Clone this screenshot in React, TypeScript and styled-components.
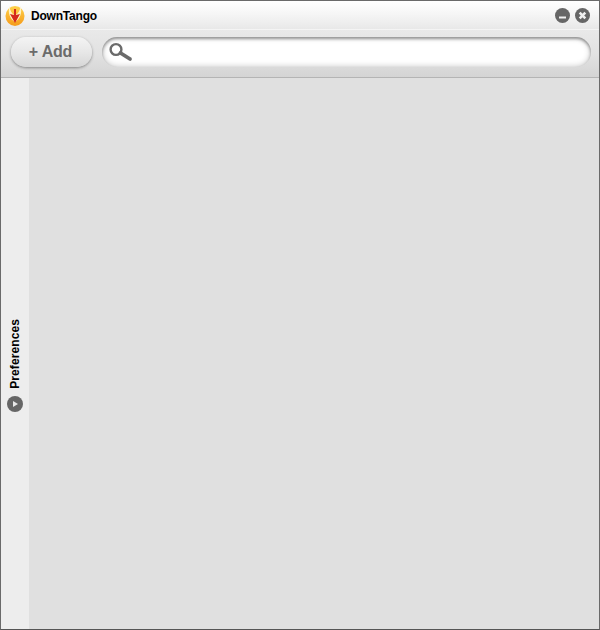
import React from "react"
import styled, { createGlobalStyle } from "styled-components"

const GlobalStyle = createGlobalStyle`
html, body {
    margin: 0;
    padding: 0;
    background: #e0e0e0;
}
`

const StyledWindow = styled.div`
width: 600px;
height: 630px;
box-sizing: border-box;
border: 1px solid #6a6a6a;
border-bottom-color: #555;
display: flex;
flex-direction: column;
font-family: "Liberation Sans", Arial, sans-serif;
overflow: hidden;
`

const StyledTitleBar = styled.div`
height: 28px;
flex: none;
display: flex;
align-items: center;
padding: 0 9px 0 3px;
background: linear-gradient(#ffffff 0%, #f6f6f6 45%, #e8e8e8 100%);
`

const StyledTitle = styled.span`
margin-left: 5px;
padding-top: 2px;
font-size: 12px;
font-weight: bold;
letter-spacing: -0.2px;
color: #000;
flex: 1;
`

const StyledWindowButtons = styled.div`
display: flex;
gap: 5px;
`

const StyledToolbar = styled.div`
height: 49px;
flex: none;
box-sizing: border-box;
display: flex;
align-items: center;
gap: 10px;
padding: 0 8px 3px 10px;
background: linear-gradient(#e9e9e9 0%, #e2e2e2 50%, #d4d4d4 100%);
border-top: 1px solid #f4f4f4;
border-bottom: 1px solid #b4b4b4;
`

const StyledAddButton = styled.div`
width: 81px;
height: 30px;
box-sizing: border-box;
padding-right: 2px;
border-radius: 15px;
display: flex;
align-items: center;
justify-content: center;
font-size: 16px;
font-weight: bold;
letter-spacing: -0.2px;
color: #6b6b6b;
background: linear-gradient(#f4f4f4 0%, #e6e6e6 55%, #d6d6d6 100%);
box-shadow: 0 1px 3px rgba(0, 0, 0, 0.4);
`

const StyledSearchBox = styled.div`
flex: 1;
height: 30px;
border-radius: 15px;
display: flex;
align-items: center;
padding-left: 6px;
background: #fff;
box-shadow: inset 0 2px 3px rgba(0, 0, 0, 0.35), inset 0 0 6px rgba(0, 0, 0, 0.25);
`

const StyledBody = styled.div`
flex: 1;
display: flex;
min-height: 0;
`

const StyledSidebar = styled.div`
width: 28px;
flex: none;
display: flex;
flex-direction: column;
align-items: center;
justify-content: flex-end;
gap: 7px;
padding-bottom: 217px;
box-sizing: border-box;
background: #ededed;
`

const StyledSidebarLabel = styled.span`
writing-mode: vertical-rl;
transform: rotate(180deg);
font-size: 12px;
font-weight: bold;
letter-spacing: 0.1px;
color: #000;
`

const StyledContent = styled.div`
flex: 1;
background: #e0e0e0;
`

const AppLogo = () => (
    <svg width="22" height="24" viewBox="0 0 22 24">
        <defs>
            <linearGradient id="logoFill" x1="0" y1="0" x2="0" y2="1">
                <stop offset="0" stopColor="#ffd24a" />
                <stop offset="1" stopColor="#f59a1a" />
            </linearGradient>
        </defs>
        <ellipse cx="11" cy="13" rx="9.5" ry="10" fill="url(#logoFill)" />
        <path d="M5.500 3 C3.500 10 6 16 11 19 C16 16 18.500 10 16.500 3 C16 8 14 11 11 12 C8 11 6 8 5.500 3Z" fill="#fff3c4" />
        <path d="M10 6 H12 V12 L16 11 L11 20 L6 11 L10 12Z" fill="#d42a1c" />
    </svg>
)

const MinimizeIcon = () => (
    <svg width="15" height="15" viewBox="0 0 15 15">
        <circle cx="7.5" cy="7.5" r="7.5" fill="#666" />
        <rect x="4" y="8.5" width="7" height="2" fill="#f0f0f0" />
    </svg>
)

const CloseIcon = () => (
    <svg width="15" height="15" viewBox="0 0 15 15">
        <circle cx="7.5" cy="7.5" r="7.5" fill="#666" />
        <path d="M4.7 4.7 L10.300 10.300 M10.300 4.7 L4.7 10.300" stroke="#f0f0f0" strokeWidth="2.6" />
    </svg>
)

const SearchIcon = () => (
    <svg width="25" height="20" viewBox="0 0 25 20">
        <circle cx="8" cy="7.5" r="5.400" fill="#fff" stroke="#6a6a6a" strokeWidth="2.400" />
        <path d="M12.500 11 L22 17" stroke="#6a6a6a" strokeWidth="3.800" strokeLinecap="round" />
    </svg>
)

const PlayIcon = () => (
    <svg width="16" height="16" viewBox="0 0 16 16">
        <circle cx="8" cy="8" r="8" fill="#666" />
        <path d="M6 5 L11 8 L6 11Z" fill="#e8e8e8" />
    </svg>
)

export default function App() {
    return (
        <StyledWindow>
            <GlobalStyle />
            <StyledTitleBar>
                <AppLogo />
                <StyledTitle>DownTango</StyledTitle>
                <StyledWindowButtons>
                    <MinimizeIcon />
                    <CloseIcon />
                </StyledWindowButtons>
            </StyledTitleBar>
            <StyledToolbar>
                <StyledAddButton>+ Add</StyledAddButton>
                <StyledSearchBox>
                    <SearchIcon />
                </StyledSearchBox>
            </StyledToolbar>
            <StyledBody>
                <StyledSidebar>
                    <StyledSidebarLabel>Preferences</StyledSidebarLabel>
                    <PlayIcon />
                </StyledSidebar>
                <StyledContent />
            </StyledBody>
        </StyledWindow>
    )
}
